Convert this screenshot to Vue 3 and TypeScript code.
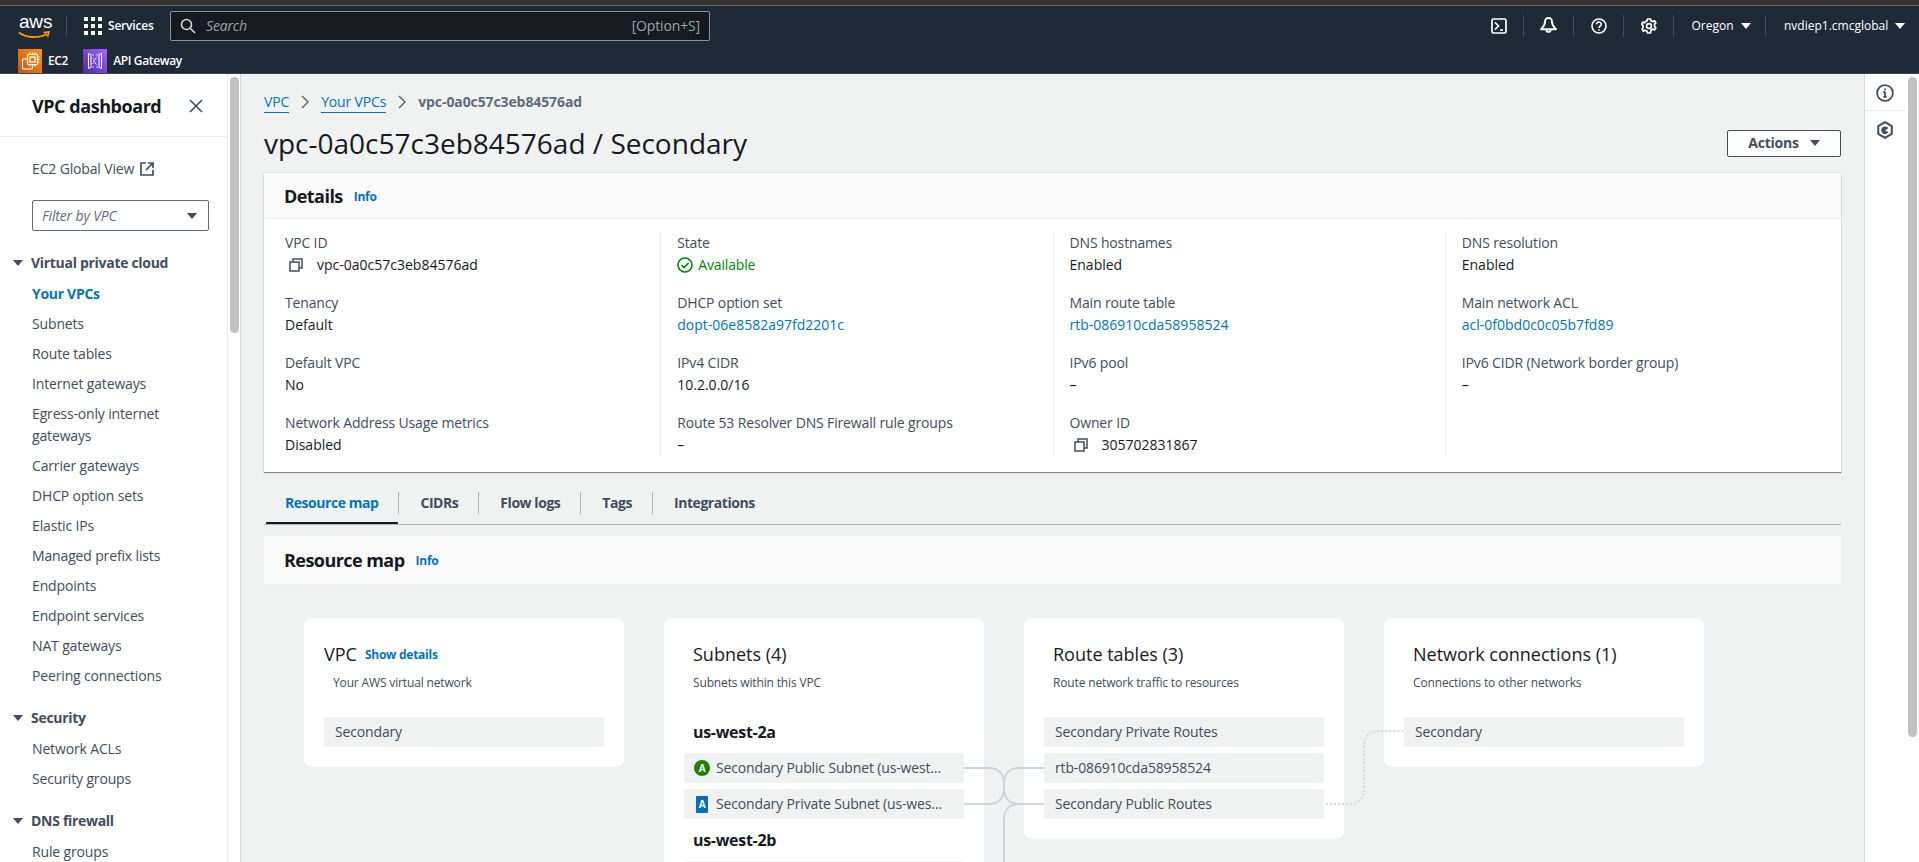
<script setup lang="ts">
interface NavSection {
  title: string;
  items: string[];
}

interface DetailCell {
  label: string;
  value: string;
  kind?: 'link' | 'copy' | 'status';
}

const navSections: NavSection[] = [
  {
    title: 'Virtual private cloud',
    items: [
      'Your VPCs',
      'Subnets',
      'Route tables',
      'Internet gateways',
      'Egress-only internet gateways',
      'Carrier gateways',
      'DHCP option sets',
      'Elastic IPs',
      'Managed prefix lists',
      'Endpoints',
      'Endpoint services',
      'NAT gateways',
      'Peering connections',
    ],
  },
  { title: 'Security', items: ['Network ACLs', 'Security groups'] },
  { title: 'DNS firewall', items: ['Rule groups'] },
];

const detailColumns: DetailCell[][] = [
  [
    { label: 'VPC ID', value: 'vpc-0a0c57c3eb84576ad', kind: 'copy' },
    { label: 'Tenancy', value: 'Default' },
    { label: 'Default VPC', value: 'No' },
    { label: 'Network Address Usage metrics', value: 'Disabled' },
  ],
  [
    { label: 'State', value: 'Available', kind: 'status' },
    { label: 'DHCP option set', value: 'dopt-06e8582a97fd2201c', kind: 'link' },
    { label: 'IPv4 CIDR', value: '10.2.0.0/16' },
    { label: 'Route 53 Resolver DNS Firewall rule groups', value: '–' },
  ],
  [
    { label: 'DNS hostnames', value: 'Enabled' },
    { label: 'Main route table', value: 'rtb-086910cda58958524', kind: 'link' },
    { label: 'IPv6 pool', value: '–' },
    { label: 'Owner ID', value: '305702831867', kind: 'copy' },
  ],
  [
    { label: 'DNS resolution', value: 'Enabled' },
    { label: 'Main network ACL', value: 'acl-0f0bd0c0c05b7fd89', kind: 'link' },
    { label: 'IPv6 CIDR (Network border group)', value: '–' },
  ],
];

const tabs = ['Resource map', 'CIDRs', 'Flow logs', 'Tags', 'Integrations'];
const routeTables = ['Secondary Private Routes', 'rtb-086910cda58958524', 'Secondary Public Routes'];
</script>

<template>
  <div class="console">
    <header class="topbar">
      <div class="topbar-row">
        <div class="aws-logo">
          <span class="aws-word">aws</span>
          <svg class="aws-smile" width="32" height="10" viewBox="0 0 32 10">
            <path d="M1 1.5C8 7 21 7.5 29 3" fill="none" stroke="#f90" stroke-width="1.8" />
            <path d="M25.5 1.6L31 1l-1.6 5" fill="none" stroke="#f90" stroke-width="1.6" />
          </svg>
        </div>
        <span class="bar-divider logo-divider"></span>
        <svg class="grid-icon" width="18" height="18" viewBox="0 0 18 18" fill="#fff">
          <rect v-for="n in 9" :key="n" :x="((n - 1) % 3) * 7" :y="Math.floor((n - 1) / 3) * 7" width="4" height="4" />
        </svg>
        <span class="services">Services</span>
        <div class="search">
          <svg width="16" height="16" viewBox="0 0 16 16" fill="none" stroke="#d5dbdb" stroke-width="1.6">
            <circle cx="6.5" cy="6.5" r="5" />
            <path d="M10.2 10.2L15 15" />
          </svg>
          <span class="search-text">Search</span>
          <span class="search-key">[Option+S]</span>
        </div>
        <div class="bar-right">
          <button class="bar-icon">
            <svg width="16" height="16" viewBox="0 0 16 16" fill="none" stroke="#fff" stroke-width="1.7">
              <rect x="1" y="1" width="14" height="14" rx="1.5" />
              <path d="M4 4.5L7.5 8 4 11.5M9 12h3" />
            </svg>
          </button>
          <button class="bar-icon">
            <svg width="17" height="17" viewBox="0 0 16 16" fill="none" stroke="#fff" stroke-width="1.8">
              <path d="M8 1c-2.300 0-3.300 1.600-3.300 3.600 0 2.800-1.700 4.500-3.700 7h14c-2-2.500-3.700-4.200-3.700-7C11.300 2.600 10.300 1 8 1z" stroke-linejoin="round" />
              <path d="M6 12a2 2 0 0 0 4 0" />
            </svg>
          </button>
          <button class="bar-icon">
            <svg width="16" height="16" viewBox="0 0 16 16" fill="none" stroke="#fff" stroke-width="1.6">
              <circle cx="8" cy="8" r="7" />
              <path d="M5.8 6.2a2.200 2.200 0 1 1 3.400 1.800C8.400 8.600 8 9 8 10" />
              <path d="M8 11.200v1.400" />
            </svg>
          </button>
          <button class="bar-icon">
            <svg width="16" height="16" viewBox="0 0 16 16" fill="none" stroke="#fff" stroke-width="1.7">
              <path d="M6.500 1h3l.5 1.900 1.800.8 1.700-1 1.300 2.200-1.300 1.500v2l1.300 1.500-1.300 2.200-1.700-1-1.800.8L9.500 15h-3l-.5-1.900-1.800-.8-1.700 1-1.300-2.200L2 9.600v-2L.7 6.100 2 3.900l1.700 1 .5-1.200L6 2.900z" stroke-linejoin="round" />
              <circle cx="8" cy="8" r="2.400" />
            </svg>
          </button>
          <button class="bar-menu region">Oregon<i class="caret-white"></i></button>
          <button class="bar-menu account">nvdiep1.cmcglobal<i class="caret-white"></i></button>
        </div>
      </div>
      <div class="shortcuts">
        <span class="shortcut">
          <svg class="service-icon" width="24" height="24" viewBox="0 0 24 24">
            <defs>
              <linearGradient id="ec2Fill" x1="0" y1="1" x2="1" y2="0">
                <stop offset="0" stop-color="#c8511b" />
                <stop offset="1" stop-color="#f90" />
              </linearGradient>
            </defs>
            <rect width="24" height="24" fill="url(#ec2Fill)" />
            <g fill="none" stroke="#fff" stroke-width="1.2">
              <rect x="9.500" y="5.500" width="10" height="10" rx="1" />
              <rect x="12" y="8" width="5" height="5" />
              <path d="M12 3.500v2M14.500 3.500v2M17 3.500v2M12 15.500v2M14.500 15.500v2M17 15.500v2M19.500 8h2M19.500 10.500h2M19.500 13h2" />
              <path d="M9.500 10H5.500a1 1 0 0 0-1 1v8a1 1 0 0 0 1 1h8a1 1 0 0 0 1-1V17.500" />
            </g>
          </svg>
          <span>EC2</span>
        </span>
        <span class="shortcut">
          <svg class="service-icon" width="24" height="24" viewBox="0 0 24 24">
            <defs>
              <linearGradient id="apiFill" x1="0" y1="1" x2="1" y2="0">
                <stop offset="0" stop-color="#4d27aa" />
                <stop offset="1" stop-color="#a166ff" />
              </linearGradient>
            </defs>
            <rect width="24" height="24" fill="url(#apiFill)" />
            <g fill="none" stroke="#fff" stroke-width="1">
              <path d="M5.500 4.500l2.500 1v13l-2.500 1zM18.500 4.500l-2.500 1v13l2.500 1z" />
              <path d="M13.500 8.500L10.500 12l3 3.500M10 5v1.500M10 9v1M14 5v1.500M14 17.500V19M10 14v1M10 17.500V19" />
            </g>
          </svg>
          <span>API Gateway</span>
        </span>
      </div>
    </header>

    <div class="body-row">
      <aside class="sidebar">
        <div class="side-head">
          <span class="side-title">VPC dashboard</span>
          <svg width="16" height="16" viewBox="0 0 16 16" fill="none" stroke="#414d5c" stroke-width="1.6">
            <path d="M2 2l12 12M14 2L2 14" />
          </svg>
        </div>
        <div class="side-body">
          <a class="global-view">
            EC2 Global View
            <svg width="16" height="16" viewBox="0 0 16 16" fill="none" stroke="#414d5c" stroke-width="1.7">
              <path d="M7 2H2v12h12V9M9 2h5v5M14 2L7 9" />
            </svg>
          </a>
          <div class="filter">
            <span>Filter by VPC</span>
            <i class="caret-dark"></i>
          </div>
          <section v-for="section in navSections" :key="section.title" class="nav-section">
            <div class="nav-head"><i class="caret-dark small"></i>{{ section.title }}</div>
            <ul class="nav-list">
              <li
                v-for="item in section.items"
                :key="item"
                :class="{ active: item === 'Your VPCs' }"
              >{{ item }}</li>
            </ul>
          </section>
        </div>
      </aside>
      <div class="scroll-track side-track"><div class="scroll-thumb side-thumb"></div></div>

      <main class="content">
        <nav class="crumbs">
          <a class="crumb-link">VPC</a>
          <svg width="16" height="16" viewBox="0 0 16 16" fill="none" stroke="#5f6b7a" stroke-width="1.5"><path d="M5 2l6 6-6 6" /></svg>
          <a class="crumb-link">Your VPCs</a>
          <svg width="16" height="16" viewBox="0 0 16 16" fill="none" stroke="#5f6b7a" stroke-width="1.5"><path d="M5 2l6 6-6 6" /></svg>
          <span class="crumb-current">vpc-0a0c57c3eb84576ad</span>
        </nav>
        <div class="page-head">
          <h1>vpc-0a0c57c3eb84576ad / Secondary</h1>
          <button class="actions">Actions<i class="caret-dark"></i></button>
        </div>

        <section class="details">
          <div class="card-head">
            <h2>Details</h2>
            <a class="info">Info</a>
          </div>
          <div class="details-grid">
            <div v-for="(col, i) in detailColumns" :key="i" class="details-col" :class="{ first: i === 0 }">
              <div v-for="cell in col" :key="cell.label" class="detail-cell">
                <div class="detail-label">{{ cell.label }}</div>
                <div class="detail-value" :class="cell.kind">
                  <svg v-if="cell.kind === 'copy'" width="16" height="16" viewBox="0 0 16 16" fill="none" stroke="#414d5c" stroke-width="1.5">
                    <rect x="2" y="5" width="9" height="9" />
                    <path d="M5 5V2h9v9h-3" />
                  </svg>
                  <svg v-if="cell.kind === 'status'" width="16" height="16" viewBox="0 0 16 16" fill="none" stroke="#037f0c" stroke-width="1.6">
                    <circle cx="8" cy="8" r="7" />
                    <path d="M4.500 8l2.500 2.500L11.500 6" />
                  </svg>
                  <span>{{ cell.value }}</span>
                </div>
              </div>
            </div>
          </div>
        </section>

        <div class="tabs">
          <div v-for="(tab, i) in tabs" :key="tab" class="tab" :class="{ active: i === 0 }">{{ tab }}</div>
        </div>

        <section class="resource-map">
          <div class="card-head map-head">
            <h2>Resource map</h2>
            <a class="info">Info</a>
          </div>
          <div class="map-canvas">
            <div class="map-card">
              <div class="map-title"><span>VPC</span><a class="info">Show details</a></div>
              <div class="map-sub indented">Your AWS virtual network</div>
              <div class="map-item">Secondary</div>
            </div>

            <div class="map-card inset">
              <div class="map-title"><span>Subnets (4)</span></div>
              <div class="map-sub">Subnets within this VPC</div>
              <div class="zone">us-west-2a</div>
              <div class="map-item">
                <span class="badge public">A</span>
                <span class="item-text">Secondary Public Subnet (us-west-2a)</span>
              </div>
              <div class="map-item">
                <span class="badge private">A</span>
                <span class="item-text">Secondary Private Subnet (us-west-2a)</span>
              </div>
              <div class="zone">us-west-2b</div>
              <div class="map-item"></div>
            </div>

            <div class="map-card inset">
              <div class="map-title"><span>Route tables (3)</span></div>
              <div class="map-sub">Route network traffic to resources</div>
              <div class="spacer"></div>
              <div v-for="route in routeTables" :key="route" class="map-item">{{ route }}</div>
            </div>

            <div class="map-card inset">
              <div class="map-title"><span>Network connections (1)</span></div>
              <div class="map-sub">Connections to other networks</div>
              <div class="spacer"></div>
              <div class="map-item">Secondary</div>
            </div>

            <svg class="connectors" width="1578" height="278" viewBox="264 584 1578 278" fill="none">
              <g stroke="#ccd6d6" stroke-width="2">
                <path d="M964 767h24q16 0 16 16v4q0 16-16 16h-24" />
                <path d="M1044 767h-24q-16 0-16 16v4q0 16 16 16h24" />
                <path d="M1044 803h-24q-16 0-16 16v43" />
              </g>
              <path d="M1326 803h22q16 0 16-16v-41q0-16 16-16h24" stroke="#d5dbdb" stroke-width="2" stroke-dasharray="2 2" />
            </svg>
          </div>
        </section>
      </main>

      <aside class="tools">
        <div class="tool first-tool">
          <svg width="18" height="18" viewBox="0 0 16 16" fill="none" stroke="#414d5c" stroke-width="1.6">
            <circle cx="8" cy="8" r="7" />
            <path d="M8 7v4.500M6.500 11.500h3M6.500 7H8M8 4v1.600" />
          </svg>
        </div>
        <div class="tool">
          <svg width="18" height="18" viewBox="0 0 16 16" fill="none" stroke="#414d5c" stroke-width="1.800">
            <path d="M8 1l6 3.500v7L8 15l-6-3.500v-7z" stroke-linejoin="round" />
            <path d="M11 6.500A3.400 3.400 0 1 0 11 10L8 8.200z" fill="#414d5c" stroke="none" />
          </svg>
        </div>
      </aside>
      <div class="scroll-track main-track"><div class="scroll-thumb main-thumb"></div></div>
    </div>
  </div>
</template>

<style>
html,
body {
  margin: 0;
  overflow: hidden;
}
</style>

<style scoped>
* {
  box-sizing: border-box;
}

.console {
  height: 862px;
  overflow: hidden;
  display: flex;
  flex-direction: column;
  font-family: "Open Sans", "Noto Sans", sans-serif;
  font-size: 14px;
  line-height: 22px;
  letter-spacing: -0.15px;
  color: #16191f;
  background: #f0f2f2;
}

.topbar {
  height: 74px;
  flex: none;
  background: #1f2a37;
  border-top: 5px solid #333;
  box-shadow: inset 0 1px 0 #666, inset 0 -1px 0 #3b4654;
  color: #fff;
}

.topbar-row {
  height: 41px;
  display: flex;
  align-items: center;
  padding-left: 18px;
}

.aws-logo {
  width: 30px;
  height: 28px;
  position: relative;
}

.aws-word {
  display: block;
  font-size: 19px;
  line-height: 20px;
  font-family: "Liberation Sans", sans-serif;
  letter-spacing: -0.2px;
  padding-left: 1px;
}

.aws-smile {
  position: absolute;
  left: 0;
  top: 19px;
}

.bar-divider {
  width: 1px;
  height: 22px;
  background: #414d5c;
}

.logo-divider {
  margin: 0 17px 0 18px;
}

.services {
  margin-left: 6px;
  font-size: 12px;
  font-weight: 600;
  width: 62px;
  letter-spacing: -0.2px;
}

.search {
  width: 540px;
  height: 30px;
  display: flex;
  align-items: center;
  padding: 0 9px;
  background: #16191f;
  border: 1px solid #879596;
  border-radius: 2px;
  font-size: 14px;
  color: #95a5a6;
}

.search-text {
  margin-left: 10px;
  font-style: italic;
  flex: 1;
}

.bar-right {
  margin-left: auto;
  display: flex;
  align-items: center;
  height: 22px;
}

.bar-icon {
  width: 50px;
  height: 22px;
  padding: 0;
  border: 0;
  background: none;
  border-right: 1px solid #414d5c;
  display: flex;
  align-items: center;
  justify-content: center;
}

.bar-menu {
  height: 22px;
  padding: 0;
  border: 0;
  background: none;
  color: #fff;
  font: inherit;
  font-size: 12px;
  letter-spacing: 0;
  display: flex;
  align-items: center;
  gap: 7px;
}

.region {
  width: 92px;
  justify-content: center;
  padding-left: 3px;
  border-right: 1px solid #414d5c;
}

.account {
  width: 153px;
  padding-left: 18px;
}

.caret-white,
.caret-dark {
  display: block;
  width: 0;
  height: 0;
  border-left: 5px solid transparent;
  border-right: 5px solid transparent;
  border-top: 6px solid #fff;
}

.caret-dark {
  border-top-color: #414d5c;
}

.shortcuts {
  display: flex;
  padding-left: 18px;
  height: 28px;
  gap: 15px;
  padding-top: 2px;
}

.shortcut {
  display: flex;
  align-items: center;
  gap: 6px;
  font-size: 12px;
  font-weight: 600;
  letter-spacing: -0.35px;
}

.body-row {
  flex: 1;
  min-height: 0;
  display: flex;
}

.sidebar {
  width: 227px;
  flex: none;
  background: #fff;
  color: #414d5c;
}

.side-head {
  height: 63px;
  display: flex;
  align-items: center;
  justify-content: space-between;
  padding: 1px 23px 0 32px;
  border-bottom: 1px solid #eaeded;
}

.side-title {
  font-size: 18px;
  font-weight: 700;
  letter-spacing: -0.45px;
  color: #16191f;
}

.side-body {
  padding: 21px 18px 0 0;
}

.global-view {
  display: flex;
  align-items: center;
  gap: 5px;
  padding-left: 32px;
}

.filter {
  margin: 20px 0 0 32px;
  width: 177px;
  height: 31px;
  display: flex;
  align-items: center;
  justify-content: space-between;
  padding: 0 11px 0 9px;
  border: 1px solid #5f6b7a;
  border-radius: 2px;
  font-style: italic;
  color: #5f6b7a;
}

.nav-section {
  margin-top: 16px;
}

.nav-section:first-of-type {
  margin-top: 21px;
}

.nav-head {
  display: flex;
  align-items: center;
  padding-left: 13px;
  font-weight: 700;
  letter-spacing: -0.3px;
}

.caret-dark.small {
  margin-right: 8px;
}

.nav-list {
  list-style: none;
  margin: 5px 0 0;
  padding: 0 0 0 32px;
}

.nav-list li {
  padding: 4px 0;
}

.nav-list li.active {
  color: #0073bb;
  font-weight: 700;
  letter-spacing: -0.3px;
}

.scroll-track {
  flex: none;
  background: #fff;
  display: flex;
  justify-content: center;
}

.side-track {
  width: 14px;
  border-left: 1px solid #eaeded;
  border-right: 1px solid #d5dbdb;
}

.main-track {
  width: 14px;
}

.scroll-thumb {
  width: 9px;
  border-radius: 5px;
  background: #c1c1c1;
  margin-top: 3px;
}

.side-thumb {
  height: 256px;
}

.main-thumb {
  height: 660px;
}

.content {
  flex: 1;
  min-width: 0;
  padding: 17px 23px 0;
}

.crumbs {
  display: flex;
  align-items: center;
  gap: 8px;
  height: 22px;
}

.crumb-link {
  color: #0073bb;
  border-bottom: 1px solid #0073bb;
  line-height: 20px;
}

.crumb-current {
  color: #5f6b7a;
  font-weight: 700;
  letter-spacing: -0.1px;
}

.page-head {
  margin-top: 12px;
  display: flex;
  align-items: center;
  justify-content: space-between;
}

h1 {
  margin: 0;
  font-size: 28px;
  line-height: 36px;
  font-weight: 400;
  letter-spacing: 0;
}

.actions {
  width: 114px;
  height: 27px;
  display: flex;
  align-items: center;
  justify-content: center;
  gap: 11px;
  background: #fff;
  border: 1px solid #414d5c;
  border-radius: 2px;
  font: inherit;
  font-weight: 700;
  letter-spacing: -0.2px;
  color: #414d5c;
}

.details {
  margin-top: 12px;
  background: #fff;
  box-shadow: 0 1px 1px rgba(0, 28, 36, 0.45), 0 0 1px rgba(0, 28, 36, 0.2);
}

.card-head {
  height: 46px;
  display: flex;
  align-items: center;
  gap: 11px;
  padding-left: 20px;
  background: #fafafa;
  border-bottom: 1px solid #eaeded;
}

h2 {
  margin: 0;
  font-size: 18px;
  font-weight: 700;
  letter-spacing: -0.55px;
}

.info {
  font-size: 12px;
  font-weight: 700;
  letter-spacing: -0.25px;
  color: #0073bb;
  padding-top: 2px;
}

.details-grid {
  display: grid;
  grid-template-columns: repeat(4, 1fr);
  padding: 13px 4px 16px;
}

.details-col {
  border-left: 1px solid #eaeded;
  padding-left: 16px;
}

.details-col.first {
  border-left-color: transparent;
}

.detail-cell {
  height: 60px;
}

.detail-cell:last-child {
  height: 44px;
}

.detail-label {
  color: #414d5c;
}

.detail-value {
  display: flex;
  align-items: center;
  letter-spacing: 0;
}

.detail-value.link {
  color: #0073bb;
}

.detail-value.copy {
  gap: 13px;
  padding-left: 3px;
}

.detail-value.status {
  gap: 5px;
  color: #037f0c;
  letter-spacing: -0.15px;
}

.tabs {
  margin-top: 20px;
  height: 33px;
  display: flex;
  border-bottom: 1px solid #aab7b8;
}

.tab {
  height: 22px;
  padding: 0 20px 0 21px;
  font-weight: 700;
  letter-spacing: -0.45px;
  color: #414d5c;
  border-left: 1px solid #aab7b8;
  position: relative;
}

.tab:first-child {
  border-left: 0;
}

.tab.active {
  color: #0073bb;
}

.tab.active::after {
  content: "";
  position: absolute;
  left: 2px;
  right: 0;
  top: 30px;
  height: 2px;
  background: #16191f;
}

.resource-map {
  margin-top: 10px;
}

.map-head {
  height: 50px;
  border-top: 1px solid #eaeded;
}

.map-canvas {
  position: relative;
  display: flex;
  align-items: flex-start;
  gap: 40px;
  padding: 33px 40px 0;
}

.map-card {
  width: 320px;
  flex: none;
  padding: 24px 20px 20px;
  background: #fff;
  border-radius: 8px;
}

.map-title {
  display: flex;
  align-items: center;
  gap: 8px;
  height: 24px;
  font-size: 18px;
  letter-spacing: 0;
}

.map-sub {
  margin-top: 7px;
  font-size: 12px;
  line-height: 20px;
  color: #414d5c;
}

.map-sub.indented {
  padding-left: 9px;
}

.inset .map-title,
.inset .map-sub,
.inset .zone {
  padding-left: 9px;
}

.spacer {
  height: 24px;
}

.map-card > .map-sub + .map-item {
  margin-top: 24px;
}

.map-item {
  height: 30px;
  display: flex;
  align-items: center;
  gap: 6px;
  padding: 0 19px 0 11px;
  background: #f0f2f2;
  border-radius: 2px;
  color: #414d5c;
}

.map-item + .map-item {
  margin-top: 6px;
}

.item-text {
  min-width: 0;
  white-space: nowrap;
  overflow: hidden;
  text-overflow: ellipsis;
}

.zone {
  margin: 10px 0 8px;
  height: 24px;
  font-size: 16px;
  font-weight: 700;
  letter-spacing: -0.3px;
}

.zone:nth-child(3) {
  margin-top: 28px;
}

.badge {
  flex: none;
  display: flex;
  align-items: center;
  justify-content: center;
  color: #fff;
  font-size: 10px;
  font-weight: 700;
  margin-left: -1px;
}

.badge.public {
  width: 16px;
  height: 16px;
  border-radius: 50%;
  background: #1d8102;
}

.badge.private {
  width: 12px;
  height: 17px;
  margin: 0 2px 0 1px;
  border-radius: 1px;
  background: #0b6bbb;
}

.connectors {
  position: absolute;
  left: 0;
  top: 0;
  pointer-events: none;
}

.tools {
  width: 41px;
  flex: none;
  background: #fff;
  border-left: 1px solid #d5dbdb;
}

.tool {
  height: 37px;
  display: flex;
  align-items: center;
  justify-content: center;
  padding-top: 1px;
}

.first-tool {
  border-bottom: 1px solid #eaeded;
}
</style>
